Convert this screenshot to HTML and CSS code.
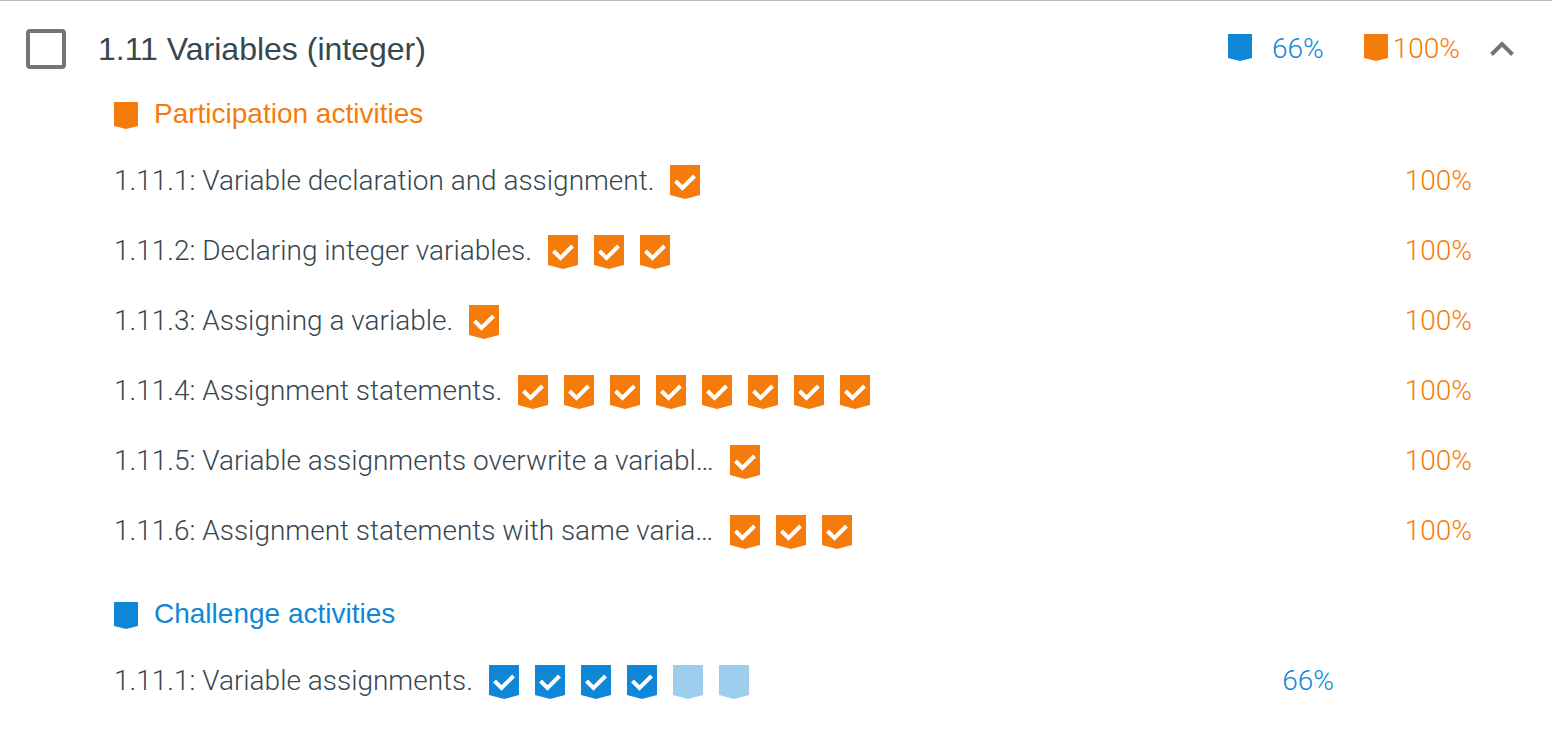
FILE: index.html
```html
<!DOCTYPE html>
<html lang="en">
<head>
<meta charset="utf-8">
<title>1.11 Variables (integer)</title>
<link rel="stylesheet" href="styles.css">
</head>
<body>
<svg class="defs" aria-hidden="true">
  <symbol id="badge" viewBox="0 0 24 27"><path d="M0 0h24v24l-12 3-12-3z" fill="currentColor"/></symbol>
  <symbol id="done" viewBox="0 0 30 34"><path d="M0 0h30v30l-15 4-15-4z" fill="currentColor"/><path d="M5.5 16l7 7 12-12" fill="none" stroke="#fff" stroke-width="4"/></symbol>
  <symbol id="todo" viewBox="0 0 30 34"><path d="M0 0h30v30l-15 4-15-4z" fill="currentColor"/></symbol>
</svg>
<main class="section">
  <header class="header">
    <input class="check" type="checkbox" id="select">
    <label class="title" for="select">1.11 Variables (integer)</label>
    <div class="summary">
      <span class="score score-blue"><svg class="badge"><use href="#badge"/></svg>66%</span>
      <span class="score score-orange"><svg class="badge"><use href="#badge"/></svg>100%</span>
      <button class="toggle" aria-label="Collapse section"><svg class="chevron" viewBox="0 0 24 16"><path d="M1.5 13.5L12 3l10.500 10.500" fill="none" stroke="currentColor" stroke-width="4"/></svg></button>
    </div>
  </header>
  <section class="group orange">
    <h2 class="heading"><svg class="badge"><use href="#badge"/></svg>Participation activities</h2>
    <ul class="list">
      <li class="row" data-done="1"><span class="name">1.11.1: Variable declaration and assignment.</span><span class="marks"></span><span class="percent">100%</span></li>
      <li class="row" data-done="3"><span class="name">1.11.2: Declaring integer variables.</span><span class="marks"></span><span class="percent">100%</span></li>
      <li class="row" data-done="1"><span class="name">1.11.3: Assigning a variable.</span><span class="marks"></span><span class="percent">100%</span></li>
      <li class="row" data-done="8"><span class="name">1.11.4: Assignment statements.</span><span class="marks"></span><span class="percent">100%</span></li>
      <li class="row" data-done="1"><span class="name clipped">1.11.5: Variable assignments overwrite a variabl…</span><span class="marks"></span><span class="percent">100%</span></li>
      <li class="row" data-done="3"><span class="name clipped">1.11.6: Assignment statements with same varia…</span><span class="marks"></span><span class="percent">100%</span></li>
    </ul>
  </section>
  <section class="group blue">
    <h2 class="heading"><svg class="badge"><use href="#badge"/></svg>Challenge activities</h2>
    <ul class="list">
      <li class="row" data-done="4" data-todo="2"><span class="name">1.11.1: Variable assignments.</span><span class="marks"></span><span class="percent">66%</span></li>
    </ul>
  </section>
</main>
<script src="script.js"></script>
</body>
</html>
```
FILE: styles.css
```css
* { box-sizing: border-box; }
body { margin: 0; background: #fff; color: #37474f; font: 300 28px/32px Roboto, sans-serif; }
.defs { position: absolute; width: 0; height: 0; }
.section { border-top: 1px solid #bdbdbd; }
.header { display: flex; align-items: center; height: 96px; padding: 0 38px 0 26px; }
.check { appearance: none; width: 40px; height: 40px; margin: 0; border: 4px solid #757575; border-radius: 4px; }
.title { margin-left: 32px; font: 400 32px/36px "Liberation Sans", Arial, sans-serif; }
.summary { display: flex; align-items: center; margin-left: auto; }
.score { display: flex; align-items: center; }
.score .badge { margin-bottom: 4px; }
.score-blue { gap: 20px; color: #1087d6; }
.score-orange { gap: 5px; margin-left: 40px; color: #f57c0a; }
.badge { flex: none; width: 24px; height: 27px; }
.toggle { display: flex; padding: 0; margin-left: 30px; border: 0; background: none; color: #757575; }
.chevron { width: 24px; height: 16px; }
.group { padding: 0 80px 0 114px; }
.orange { color: #f57c0a; }
.blue { color: #1087d6; padding-right: 218px; }
.heading { display: flex; align-items: center; gap: 16px; height: 34px; margin: 0; font: 400 28px/34px "Liberation Sans", Arial, sans-serif; }
.heading .badge { margin-top: 2px; }
.list { margin: 0; padding: 15px 0 31px; list-style: none; }
.row { display: flex; align-items: center; height: 70px; }
.name { color: #37474f; }
.clipped { width: 600px; }
.marks { display: flex; gap: 16px; margin: 2px 0 0 16px; }
.mark { width: 30px; height: 34px; }
.todo { opacity: .4; }
.percent { margin-left: auto; }
```
FILE: script.js
```js
document.querySelectorAll('.row').forEach(row => {
  const mark = kind => `<svg class="mark ${kind}"><use href="#${kind}"/></svg>`;
  row.querySelector('.marks').innerHTML =
    mark('done').repeat(Number(row.dataset.done)) + mark('todo').repeat(Number(row.dataset.todo || 0));
});
```
